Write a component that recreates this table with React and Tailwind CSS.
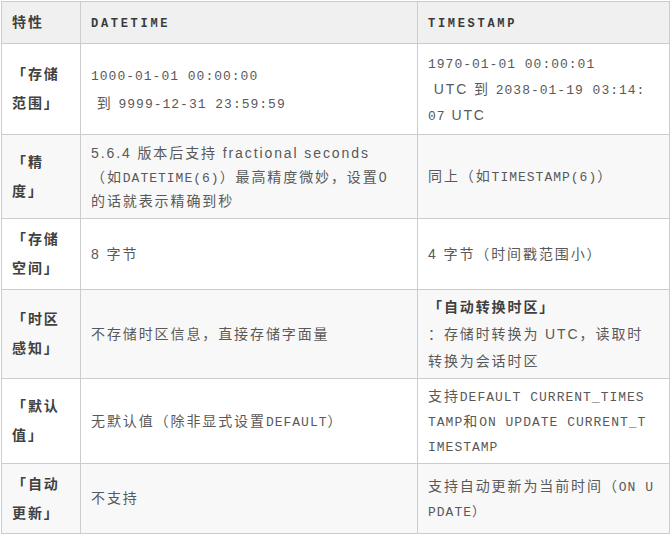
import React from 'react';

const sans = "font-['Liberation_Sans','Noto_Sans_CJK_SC',sans-serif]";
const mono = "font-['Liberation_Mono','Noto_Sans_CJK_SC',monospace] text-[13px] tracking-[1px] leading-none";
const head = "font-['Liberation_Mono',monospace] font-bold text-[12px] text-[#3a3a3a] tracking-[2.7px]";

const M = ({ children }) => <span className={mono}>{children}</span>;
const S = ({ children }) => <span className={`${sans} leading-none`}>{children}</span>;

const Lines = ({ lines, lh = 'leading-[25px]' }) => (
  <div className={lh}>
    {lines.map((l, i) => (
      <div key={i} className="whitespace-pre">{l}</div>
    ))}
  </div>
);

const rows = [
  {
    h: 'h-[91px]',
    bg: 'bg-white',
    label: ['「存储', '范围」'],
    a: <Lines lh="leading-[28px]" lines={[<M>1000-01-01 00:00:00</M>, <> 到 <M>9999-12-31 23:59:59</M></>]} />,
    b: (
      <Lines
        lh="leading-[26px]"
        lines={[<M>1970-01-01 00:00:01</M>, <> <S>UTC</S> 到 <M>2038-01-19 03:14:</M></>, <><M>07</M> <S>UTC</S></>]}
      />
    ),
  },
  {
    h: 'h-[84px]',
    bg: 'bg-[#f8f8f8]',
    label: ['「精', '度」'],
    a: (
      <Lines
        lh="leading-[24px]"
        lines={[<><S>5.6.4</S> 版本后支持 <S>fractional seconds</S></>, <>（如<M>DATETIME(6)</M>）最高精度微妙，设置<S>0</S></>, '的话就表示精确到秒']}
      />
    ),
    b: <Lines lines={[<>同上（如<M>TIMESTAMP(6)</M>）</>]} />,
  },
  {
    h: 'h-[71px]',
    bg: 'bg-white',
    label: ['「存储', '空间」'],
    a: <Lines lines={[<><S>8</S> 字节</>]} />,
    b: <Lines lines={[<><S>4</S> 字节（时间戳范围小）</>]} />,
  },
  {
    h: 'h-[89px]',
    bg: 'bg-[#f8f8f8]',
    label: ['「时区', '感知」'],
    a: <Lines lines={['不存储时区信息，直接存储字面量']} />,
    b: (
      <Lines
        lh="leading-[27px]"
        lines={[<span className="font-bold text-[#404040]">「自动转换时区」</span>, <>：存储时转换为 <S>UTC</S>，读取时</>, '转换为会话时区']}
      />
    ),
  },
  {
    h: 'h-[85px]',
    bg: 'bg-white',
    label: ['「默认', '值」'],
    a: <Lines lines={[<>无默认值（除非显式设置<M>DEFAULT</M>）</>]} />,
    b: (
      <Lines
        lines={[<>支持<M>DEFAULT CURRENT_TIMES</M></>, <><M>TAMP</M>和<M>ON UPDATE CURRENT_T</M></>, <M>IMESTAMP</M>]}
      />
    ),
  },
  {
    h: 'h-[70px]',
    bg: 'bg-[#f8f8f8]',
    label: ['「自动', '更新」'],
    a: <Lines lines={['不支持']} />,
    b: <Lines lines={[<>支持自动更新为当前时间（<M>ON U</M></>, <M>PDATE）</M>]} />,
  },
];

export default function App() {
  return (
    <div className="bg-white w-[670px] h-[536px] pl-px pt-px">
      <table className={`border-collapse table-fixed w-[668px] text-[14px] text-[#595959] tracking-[1.9px] ${sans}`}>
        <colgroup>
          <col className="w-[79px]" />
          <col className="w-[337px]" />
          <col className="w-[252px]" />
        </colgroup>
        <thead>
          <tr className="h-[42px] bg-[#f0f0f0]">
            <th className="border border-[#cccccc] px-[10px] text-left font-bold text-[#404040]">特性</th>
            <th className="border border-[#cccccc] px-[10px] text-left">
              <span className={head}>DATETIME</span>
            </th>
            <th className="border border-[#cccccc] px-[10px] text-left">
              <span className={head}>TIMESTAMP</span>
            </th>
          </tr>
        </thead>
        <tbody>
          {rows.map((r, i) => (
            <tr key={i} className={`${r.h} ${r.bg}`}>
              <td className="border border-[#cccccc] px-[10px] align-middle font-bold text-[#404040] leading-[29px]">
                {r.label.map((l, j) => (
                  <div key={j} className="whitespace-pre">{l}</div>
                ))}
              </td>
              <td className="border border-[#cccccc] px-[10px] align-middle">{r.a}</td>
              <td className="border border-[#cccccc] px-[10px] align-middle">{r.b}</td>
            </tr>
          ))}
        </tbody>
      </table>
    </div>
  );
}
